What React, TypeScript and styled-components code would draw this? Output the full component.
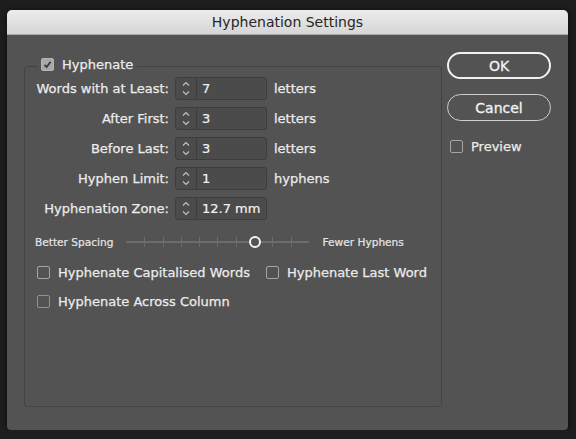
import React from 'react'
import styled, { createGlobalStyle } from 'styled-components'

const GlobalStyle = createGlobalStyle`
  html, body {
    margin: 0;
    padding: 0;
    background: #1e1e1e;
  }
  body {
    font-family: "DejaVu Sans", "Liberation Sans", sans-serif;
    -webkit-font-smoothing: antialiased;
  }
`

const fields = [
  { label: 'Words with at Least:', value: '7', unit: 'letters' },
  { label: 'After First:', value: '3', unit: 'letters' },
  { label: 'Before Last:', value: '3', unit: 'letters' },
  { label: 'Hyphen Limit:', value: '1', unit: 'hyphens' },
  { label: 'Hyphenation Zone:', value: '12.7 mm', unit: '' },
]

const TICKS = 10
const KNOB = 7

const Check = ({ checked, focus }: { checked?: boolean; focus?: boolean }) => (
  <Box $checked={checked} $focus={focus}>
    {checked && (
      <svg width="9" height="9" viewBox="0 0 9 9">
        <path d="M1.5 4.8 L3.6 7 L7.6 1.8" fill="none" stroke="#3c3c3c" strokeWidth="1.8" />
      </svg>
    )}
  </Box>
)

const Stepper = () => (
  <Arrows>
    <svg width="10" height="17" viewBox="0 0 10 17">
      <path d="M2 5.5 L5 2.5 L8 5.5" fill="none" stroke="#c4c4c4" strokeWidth="1.1" />
      <path d="M2 11.5 L5 14.5 L8 11.5" fill="none" stroke="#c4c4c4" strokeWidth="1.1" />
    </svg>
  </Arrows>
)

const App = () => {
  return (
    <>
      <GlobalStyle />
      <Window>
        <TitleBar>Hyphenation Settings</TitleBar>
        <Body>
          <Group>
            <Legend>
              <Check checked />
              Hyphenate
            </Legend>
            <Fields>
              {fields.map(f => (
                <React.Fragment key={f.label}>
                  <Label>{f.label}</Label>
                  <Spinner>
                    <Stepper />
                    <Value>{f.value}</Value>
                  </Spinner>
                  <Unit>{f.unit}</Unit>
                </React.Fragment>
              ))}
            </Fields>
            <SliderRow>
              <SmallText>Better Spacing</SmallText>
              <Track>
                {Array.from({ length: TICKS - 1 }, (_, i) => i + 1)
                  .filter(i => i !== KNOB)
                  .map(i => (
                    <Tick key={i} style={{ left: `${(i / TICKS) * 100}%` }} />
                  ))}
                <Knob style={{ left: `${(KNOB / TICKS) * 100}%` }} />
              </Track>
              <SmallText>Fewer Hyphens</SmallText>
            </SliderRow>
            <Options>
              <OptionRow>
                <Option>
                  <Check />
                  Hyphenate Capitalised Words
                </Option>
                <Option>
                  <Check />
                  Hyphenate Last Word
                </Option>
              </OptionRow>
              <OptionRow>
                <Option>
                  <Check focus />
                  Hyphenate Across Column
                </Option>
              </OptionRow>
            </Options>
          </Group>
          <Side>
            <Button $primary>OK</Button>
            <Button>Cancel</Button>
            <Preview>
              <Check />
              Preview
            </Preview>
          </Side>
        </Body>
      </Window>
    </>
  )
}

export default App

const Window = styled.div`
  margin: 10px 0 0 7px;
  width: 561px;
  height: 420px;
  background: #535353;
  border-radius: 5px 5px 4px 4px;
  overflow: hidden;
  box-shadow: 0 0 6px rgba(0, 0, 0, 0.6);
`

const TitleBar = styled.div`
  height: 25px;
  box-sizing: border-box;
  background: linear-gradient(#ececec, #d6d6d6);
  border-bottom: 1px solid #a9a9a9;
  text-align: center;
  line-height: 24px;
  font-size: 14px;
  color: #262626;
`

const Body = styled.div`
  display: flex;
  padding: 0 17px;
  gap: 5px;
`

const Group = styled.fieldset`
  margin: 21px 0 0;
  padding: 0;
  width: 418px;
  height: 351px;
  box-sizing: border-box;
  border: 1px solid #434343;
  border-radius: 3px;
  min-width: 0;
`

const Legend = styled.legend`
  display: flex;
  align-items: center;
  gap: 8px;
  height: 16px;
  margin-left: 13px;
  padding: 0 4px 5px 3px;
  font-size: 13px;
  color: #ececec;
  -webkit-text-stroke: 0.25px #ececec;
`

const Box = styled.span<{ $checked?: boolean; $focus?: boolean }>`
  display: inline-flex;
  align-items: center;
  justify-content: center;
  width: 13px;
  height: 13px;
  box-sizing: border-box;
  flex: none;
  border-radius: 2px;
  background: ${p => (p.$checked ? '#a9a9a9' : 'transparent')};
  border: ${p => (p.$focus ? '1.5px' : '1px')} solid
    ${p => (p.$checked ? '#b4b4b4' : p.$focus ? '#6f98dc' : '#a4a4a4')};
`

const Fields = styled.div`
  display: grid;
  grid-template-columns: 144px 92px auto;
  column-gap: 6px;
  row-gap: 7px;
  align-items: center;

  & > :nth-child(3n) {
    margin-left: 1px;
  }
`

const Label = styled.div`
  text-align: right;
  font-size: 13px;
  color: #ececec;
  -webkit-text-stroke: 0.25px #ececec;
  white-space: nowrap;
`

const Spinner = styled.div`
  display: flex;
  height: 23px;
  box-sizing: border-box;
  border: 1px solid #3d3d3d;
  border-radius: 3px;
  background: #4b4b4b;
`

const Arrows = styled.div`
  width: 20px;
  display: flex;
  align-items: center;
  justify-content: center;
  border-right: 1px solid #3d3d3d;
`

const Value = styled.div`
  padding-left: 5px;
  line-height: 21px;
  font-size: 13px;
  color: #f2f2f2;
  -webkit-text-stroke: 0.2px #f2f2f2;
`

const Unit = styled.div`
  font-size: 13px;
  color: #ececec;
  -webkit-text-stroke: 0.25px #ececec;
`

const SliderRow = styled.div`
  display: flex;
  align-items: center;
  gap: 13px;
  height: 14px;
  margin: 15px 0 0 10px;
`

const SmallText = styled.div`
  font-size: 10.6px;
  color: #e6e6e6;
  -webkit-text-stroke: 0.2px #e6e6e6;
  white-space: nowrap;
`

const Track = styled.div`
  position: relative;
  flex: none;
  width: 183px;
  height: 2px;
  background: #6c6c6c;
`

const Tick = styled.span`
  position: absolute;
  top: -4px;
  width: 1px;
  height: 10px;
  margin-left: -0.5px;
  background: #6c6c6c;
`

const Knob = styled.span`
  position: absolute;
  top: -5px;
  width: 12px;
  height: 12px;
  margin-left: -6px;
  box-sizing: border-box;
  border: 2px solid #f4f4f4;
  border-radius: 50%;
  background: #535353;
`

const Options = styled.div`
  display: flex;
  flex-direction: column;
  gap: 13px;
  margin: 15px 0 0 12px;
`

const OptionRow = styled.div`
  display: flex;
  gap: 16px;
  height: 16px;
  align-items: center;
`

const Option = styled.label`
  display: flex;
  align-items: center;
  gap: 8px;
  font-size: 13px;
  color: #ececec;
  -webkit-text-stroke: 0.25px #ececec;
  white-space: nowrap;
`

const Side = styled.div`
  display: flex;
  flex-direction: column;
  margin-top: 17px;
  width: 104px;
`

const Button = styled.button<{ $primary?: boolean }>`
  height: 27px;
  margin-bottom: 15px;
  border-radius: 14px;
  background: transparent;
  box-sizing: border-box;
  border: ${p => (p.$primary ? '2px solid #f2f2f2' : '1px solid #cfcfcf')};
  color: #f2f2f2;
  font-family: inherit;
  font-size: 14px;
  -webkit-text-stroke: 0.3px #f2f2f2;
`

const Preview = styled.label`
  display: flex;
  align-items: center;
  gap: 8px;
  margin: 3px 0 0 3px;
  font-size: 13px;
  color: #ececec;
  -webkit-text-stroke: 0.25px #ececec;
`
